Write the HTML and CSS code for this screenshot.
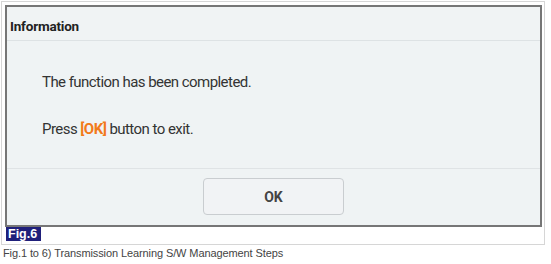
FILE: index.html
```html
<!DOCTYPE html>
<html>
<head>
<meta charset="utf-8">
<link rel="stylesheet" href="styles.css">
</head>
<body>
<div class="figure">
  <div class="dialog">
    <div class="dlg-head">Information</div>
    <div class="dlg-body">
      <p class="line">The function has been completed.</p>
      <p class="line line2">Press <span class="hl">[OK]</span> button to exit.</p>
    </div>
    <div class="dlg-foot"><button class="ok-btn">OK</button></div>
  </div>
  <div class="fig-label">Fig.6</div>
</div>
<p class="caption">Fig.1 to 6) Transmission Learning S/W Management Steps</p>
</body>
</html>
```
FILE: styles.css
```css
* { box-sizing: border-box; }
html, body { margin: 0; padding: 0; background: #fff; }
body { font-family: Roboto, "Liberation Sans", sans-serif; }

.figure {
  margin: 1px 0 0 1px;
  width: 544px;
  height: 244px;
  border: 1px solid #d6d6d6;
  padding: 3px 2px 0 3px;
}

.dialog {
  width: 537px;
  height: 222px;
  border: 2px solid #767676;
  background: #eff3f4;
  display: flex;
  flex-direction: column;
}

.dlg-head {
  height: 34px;
  border-bottom: 1px solid #dde2e4;
  padding: 5px 0 0 3px;
  line-height: 28px;
  font-size: 13.5px;
  font-weight: 700;
  letter-spacing: -0.2px;
  color: #222;
  background: #f0f3f4;
}

.dlg-body {
  height: 128px;
  border-bottom: 1px solid #dfe3e5;
  padding: 31px 0 0 35px;
}

.line {
  margin: 0;
  font-size: 15px;
  line-height: 20px;
  letter-spacing: -0.55px;
  color: #333;
}
.line2 { margin-top: 27px; }
.hl { color: #f27a1a; font-weight: 700; }

.dlg-foot {
  flex: 1;
  display: flex;
  justify-content: center;
  padding-top: 9px;
}

.ok-btn {
  width: 141px;
  height: 37px;
  border: 1px solid #c9cdd0;
  border-radius: 4px;
  background: #f1f3f5;
  font-family: Roboto, "Liberation Sans", sans-serif;
  font-size: 14px;
  font-weight: 700;
  color: #444;
  padding: 0;
}

.fig-label {
  margin-left: 1px;
  width: 35px;
  height: 14px;
  background: #1f1f7a;
  color: #fff;
  font-family: "Liberation Sans", Arial, sans-serif;
  font-weight: 700;
  font-size: 12.5px;
  line-height: 14px;
  padding-left: 2px;
}

.caption {
  margin: 2px 0 0 3px;
  font-family: "Liberation Sans", Arial, sans-serif;
  font-size: 11px;
  letter-spacing: -0.1px;
  line-height: 13px;
  color: #444;
}
```
